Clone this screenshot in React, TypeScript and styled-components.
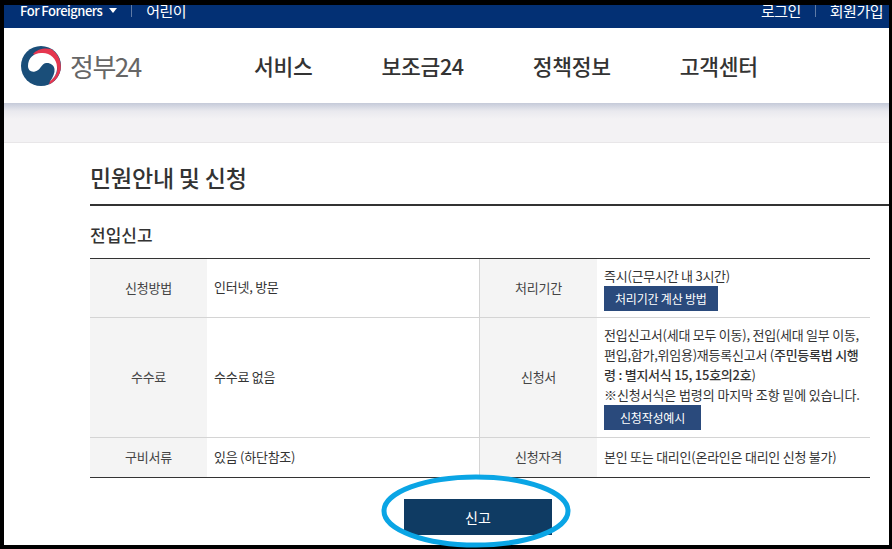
import React from 'react';
import styled, { createGlobalStyle } from 'styled-components';

const GlobalStyle = createGlobalStyle`
  html, body {
    margin: 0;
    padding: 0;
    background: #000;
  }
  body {
    font-family: "Noto Sans CJK KR", "Noto Sans", sans-serif;
    color: #333;
  }
`;

// page frame
const Frame = styled.div`
  position: relative;
  box-sizing: border-box;
  width: 892px;
  height: 549px;
  padding: 5px 3px 4px 4px;
  background: #000;
  overflow: hidden;
`;

const Page = styled.div`
  height: 100%;
  background: #fff;
  overflow: hidden;
`;

// top bar
const TopBar = styled.div`
  display: flex;
  justify-content: space-between;
  height: 23px;
  padding: 0 6px 0 16px;
  background: #033074;
  color: #fff;
  line-height: 11px;
  overflow: hidden;
`;

const TopGroup = styled.div`
  display: flex;
  align-items: flex-start;
  letter-spacing: -0.5px;
`;

const TopLink = styled.span<{ $latin?: boolean }>`
  font-size: ${(p) => (p.$latin ? 13 : 15)}px;
  font-weight: ${(p) => (p.$latin ? 500 : 400)};
`;

const Caret = styled.i`
  width: 0;
  height: 0;
  margin: 3px 0 0 7px;
  border-left: 4px solid transparent;
  border-right: 4px solid transparent;
  border-top: 5px solid #fff;
`;

const TopDivider = styled.i<{ $gap: number }>`
  width: 1px;
  height: 12px;
  margin: 0 ${(p) => p.$gap}px;
  background: #5f7ba6;
`;

// header
const Header = styled.header`
  display: flex;
  align-items: center;
  height: 75px;
  padding-left: 17px;
  background: #fff;
`;

const Logo = styled.div`
  display: flex;
  align-items: center;
  gap: 9px;
  width: 233px;
`;

const LogoText = styled.span`
  color: #666;
  font-size: 26px;
  font-weight: 400;
  letter-spacing: -1.5px;
  line-height: 40px;
`;

const Nav = styled.nav`
  display: flex;
  gap: 69px;
`;

const NavItem = styled.a`
  color: #333;
  font-size: 21.5px;
  font-weight: 500;
  letter-spacing: -0.3px;
  line-height: 30px;
`;

const Band = styled.div`
  height: 39px;
  border-bottom: 1px solid #e8e6e8;
  background: linear-gradient(#c5cad9 0, #e9e9ee 8px, #f3f2f4 16px);
`;

// content
const Content = styled.main`
  padding: 18px 0 0 86px;
`;

const Title = styled.h1`
  margin: 0;
  padding-bottom: 11px;
  border-bottom: 2px solid #333;
  color: #333;
  font-size: 23px;
  font-weight: 500;
  line-height: 32px;
  letter-spacing: -0.2px;
`;

const SubTitle = styled.h2`
  margin: 17px 0 11px;
  color: #333;
  font-size: 17px;
  font-weight: 500;
  line-height: 24px;
`;

const InfoGrid = styled.div`
  display: grid;
  grid-template-columns: 117px 272px 118px 273px;
  grid-template-rows: 59px 120px 39px;
  width: 780px;
  border-top: 1px solid #333;
  border-bottom: 1px solid #333;
  font-size: 13px;
  letter-spacing: -0.25px;
`;

const Label = styled.div<{ $last?: boolean; $side?: boolean }>`
  display: flex;
  align-items: center;
  justify-content: center;
  padding-bottom: 2px;
  background: #f4f4f4;
  color: #444;
  border-bottom: ${(p) => (p.$last ? 'none' : '1px solid #d4d4d4')};
  border-left: ${(p) => (p.$side ? '1px solid #d4d4d4' : 'none')};
`;

const Value = styled.div<{ $last?: boolean }>`
  display: flex;
  flex-direction: column;
  align-items: flex-start;
  justify-content: center;
  padding: 0 7px;
  color: #333;
  line-height: 20px;
  border-bottom: ${(p) => (p.$last ? 'none' : '1px solid #d4d4d4')};
`;

const Plain = styled.span`
  margin-bottom: 2px;
`;

const Note = styled.span`
  letter-spacing: -0.1px;
  white-space: nowrap;
`;

const Strong = styled.b`
  font-weight: 500;
`;

const SmallButton = styled.button<{ $pad: number }>`
  height: 25px;
  padding: 0 ${(p) => p.$pad}px;
  border: 0;
  background: #2a4a7c;
  color: #fff;
  font-family: inherit;
  font-size: 12px;
  font-weight: 400;
  letter-spacing: -0.2px;
`;

const Actions = styled.div`
  display: flex;
  justify-content: center;
  width: 776px;
  padding-top: 21px;
`;

const ReportButton = styled.button`
  width: 148px;
  height: 36px;
  border: 0;
  background: #0f3b63;
  color: #fff;
  font-family: inherit;
  font-size: 14px;
`;

// hand-drawn highlight over the button
const Highlight = styled.svg`
  position: absolute;
  left: 380px;
  top: 473px;
  pointer-events: none;
`;

function LogoMark() {
  return (
    <svg width="40" height="40" viewBox="0 0 40 40">
      <circle cx="20" cy="20" r="20" fill="#1a4e79" />
      <path d="M12 8C16 3 24 1.5 30 3C37 7 41 16 39.5 24C38 31 33 36 28 38.5L29 35C35 30 37 26 36 20Z" fill="#e5364f" />
      <path d="M7 20C7 12 13 7 20 7C28 6 36 12 36 21C36.5 27 33 32 29 35.5C32 31 34 27 33.5 23C33 19 29 16.5 25 17C20 18 20 24 14 25.5C10 26.5 7 24 7 20Z" fill="#fff" />
    </svg>
  );
}

export default function App() {
  return (
    <>
      <GlobalStyle />
      <Frame>
        <Page>
          <TopBar>
            <TopGroup>
              <TopLink $latin>For Foreigners</TopLink>
              <Caret />
              <TopDivider $gap={14} />
              <TopLink>어린이</TopLink>
            </TopGroup>
            <TopGroup>
              <TopLink>로그인</TopLink>
              <TopDivider $gap={14} />
              <TopLink>회원가입</TopLink>
            </TopGroup>
          </TopBar>
          <Header>
            <Logo>
              <LogoMark />
              <LogoText>정부24</LogoText>
            </Logo>
            <Nav>
              <NavItem>서비스</NavItem>
              <NavItem>보조금24</NavItem>
              <NavItem>정책정보</NavItem>
              <NavItem>고객센터</NavItem>
            </Nav>
          </Header>
          <Band />
          <Content>
            <Title>민원안내 및 신청</Title>
            <SubTitle>전입신고</SubTitle>
            <InfoGrid>
              <Label>신청방법</Label>
              <Value><Plain>인터넷, 방문</Plain></Value>
              <Label $side>처리기간</Label>
              <Value>
                즉시(근무시간 내 3시간)
                <SmallButton $pad={11}>처리기간 계산 방법</SmallButton>
              </Value>
              <Label>수수료</Label>
              <Value><Plain>수수료 없음</Plain></Value>
              <Label $side>신청서</Label>
              <Value>
                <span>
                  전입신고서(세대 모두 이동), 전입(세대 일부 이동, 편입,합가,위임용)재등록신고서 (
                  <Strong>주민등록법 시행령 : 별지서식 15, 15호의2호</Strong>)
                </span>
                <Note>※신청서식은 법령의 마지막 조항 밑에 있습니다.</Note>
                <SmallButton $pad={16}>신청작성예시</SmallButton>
              </Value>
              <Label $last>구비서류</Label>
              <Value $last><Plain>있음 (하단참조)</Plain></Value>
              <Label $last $side>신청자격</Label>
              <Value $last><Plain>본인 또는 대리인(온라인은 대리인 신청 불가)</Plain></Value>
            </InfoGrid>
            <Actions>
              <ReportButton>신고</ReportButton>
            </Actions>
          </Content>
        </Page>
        <Highlight width="192" height="76" viewBox="0 0 192 76">
          <ellipse cx="96" cy="38" rx="92" ry="34" fill="none" stroke="#0aa5e5" strokeWidth="5" />
        </Highlight>
      </Frame>
    </>
  );
}
